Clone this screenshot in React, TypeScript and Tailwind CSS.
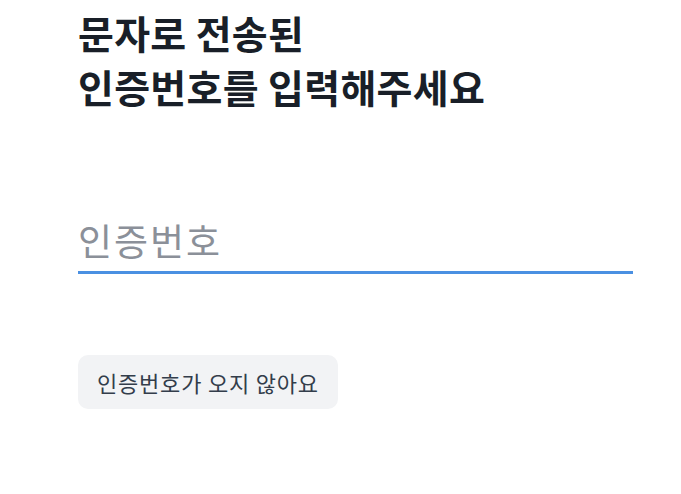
export default function App() {
  return (
    <div
      className="min-h-[494px] bg-white pl-[78px] pr-[48px] pt-[5px]"
      style={{ fontFamily: '"Noto Sans CJK KR", "Noto Sans", sans-serif' }}
    >
      <h1 className="text-[39px] font-bold leading-[54px] tracking-[0.3px] text-[#191f28]">
        문자로 전송된
        <br />
        인증번호를 입력해주세요
      </h1>

      <div className="mt-[103px] border-b-[3px] border-[#4a90e2] pb-[7px]">
        <input
          className="block w-full bg-transparent text-[37px] leading-[48px] tracking-[2px] text-[#191f28] outline-none placeholder:text-[#8b9099]"
          placeholder="인증번호"
          inputMode="numeric"
        />
      </div>

      <button className="mt-[81px] h-[54px] rounded-[10px] bg-[#f2f3f5] px-[19px] text-[22px] tracking-[0.8px] text-[#333d4b]">
        인증번호가 오지 않아요
      </button>
    </div>
  )
}
